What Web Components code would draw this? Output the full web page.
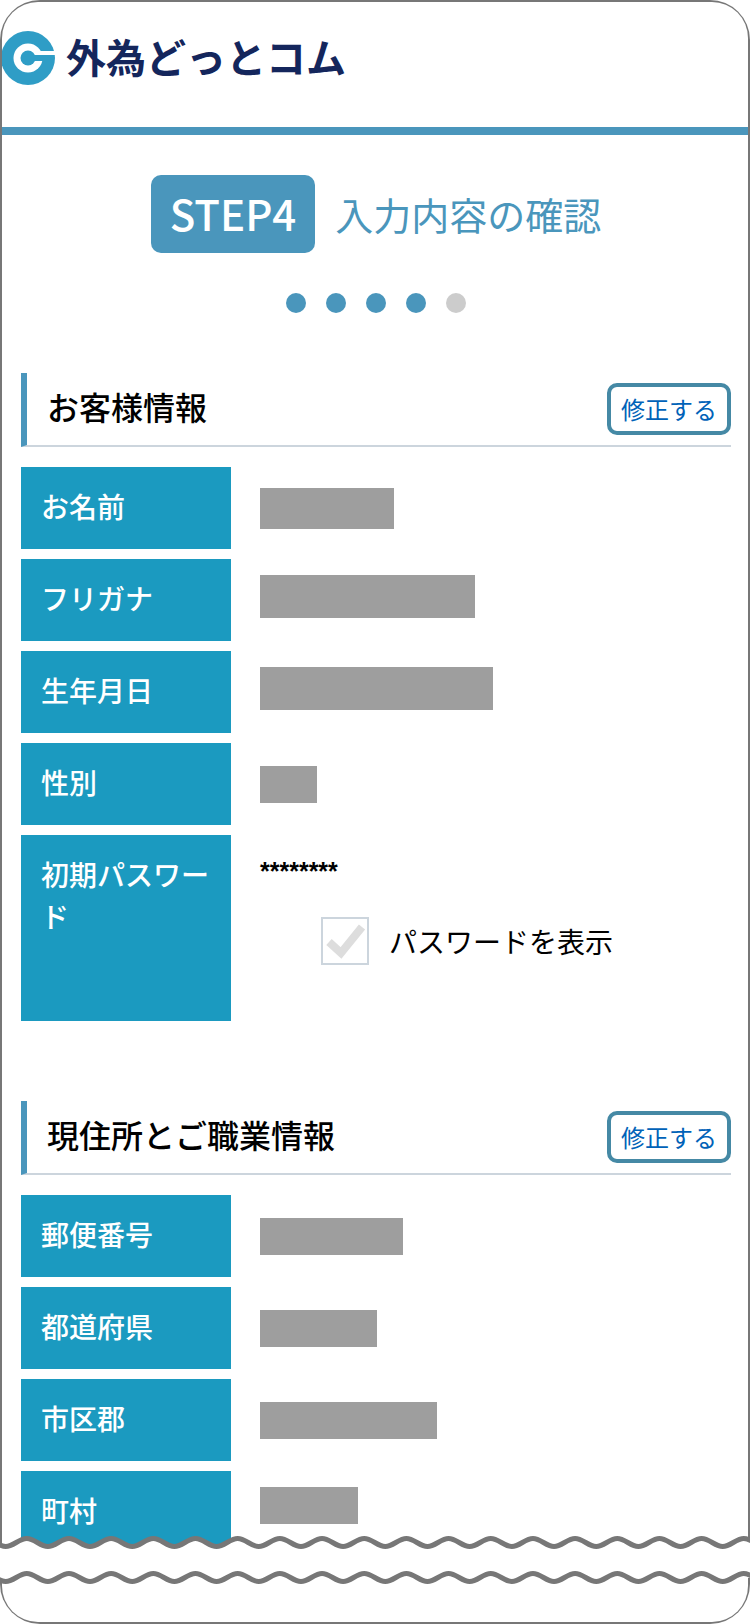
<!DOCTYPE html>
<html lang="ja">
<head>
<meta charset="utf-8">
<meta name="viewport" content="width=device-width, initial-scale=1">
<title>入力内容の確認</title>
<style>
  body {
    margin: 0;
    background: #fff;
    color: #000;
    font-family: "Noto Sans CJK JP", sans-serif;
    font-size: 28px;
    line-height: 42px;
  }
</style>
</head>
<body>
<entry-page>
  <site-header slot="header" name="外為どっとコム"></site-header>
  <step-title step="4" total="5">入力内容の確認</step-title>
  <info-section heading="お客様情報">
    <info-row label="お名前"><masked-value width="134" height="41"></masked-value></info-row>
    <info-row label="フリガナ" align="top"><masked-value width="215" height="43"></masked-value></info-row>
    <info-row label="生年月日" align="top"><masked-value width="233" height="43"></masked-value></info-row>
    <info-row label="性別"><masked-value width="57" height="37"></masked-value></info-row>
    <info-row label="初期パスワード" align="fill"><password-field></password-field></info-row>
  </info-section>
  <info-section heading="現住所とご職業情報">
    <info-row label="郵便番号"><masked-value width="143" height="37"></masked-value></info-row>
    <info-row label="都道府県"><masked-value width="117" height="37"></masked-value></info-row>
    <info-row label="市区郡"><masked-value width="177" height="37"></masked-value></info-row>
    <info-row label="町村" align="top"><masked-value width="98" height="37"></masked-value></info-row>
  </info-section>
</entry-page>

<script>
class EntryPage extends HTMLElement {
  constructor() {
    super();
    this.attachShadow({ mode: 'open' });
  }

  connectedCallback() {
    this.shadowRoot.innerHTML = `
      <style>
        :host { display: block; }
        .frame {
          background: #777;
          padding: 2px 2px 0;
          border-radius: 40px 40px 0 0;
        }
        .sheet {
          background: #fff;
          border-radius: 36px 36px 0 0;
          overflow: hidden;
        }
        main {
          display: flex;
          flex-direction: column;
          gap: 60px;
          padding: 40px 17px 0 19px;
        }
        torn-edge {
          position: relative;
          margin-top: -17px;
        }
        .foot {
          height: 46px;
          margin-top: -8px;
          padding: 0 2px 2px;
          background: #777;
          border-radius: 0 0 40px 40px;
        }
        .foot div {
          height: 100%;
          background: #fff;
          border-radius: 0 0 36px 36px;
        }
      </style>
      <div class="frame">
        <div class="sheet">
          <slot name="header"></slot>
          <main><slot></slot></main>
        </div>
      </div>
      <torn-edge></torn-edge>
      <div class="foot"><div></div></div>
    `;
  }
}

customElements.define('entry-page', EntryPage);

class SiteHeader extends HTMLElement {
  constructor() {
    super();
    this.attachShadow({ mode: 'open' });
  }

  connectedCallback() {
    this.shadowRoot.innerHTML = `
      <style>
        :host { display: block; }
        header {
          display: flex;
          align-items: flex-start;
          gap: 10px;
          padding: 29px 0 42px;
          border-bottom: 8px solid #4a96bc;
        }
        svg { display: block; width: 54px; height: 54px; }
        .name {
          color: #14265c;
          font-size: 40px;
          font-weight: 700;
          line-height: 50px;
        }
      </style>
      <header>
        <svg viewBox="0 0 54 54" aria-hidden="true">
          <circle cx="26" cy="27" r="27" fill="#2f9dc6"/>
          <circle cx="26" cy="27" r="14.500" fill="#fff"/>
          <circle cx="26" cy="27" r="7.500" fill="#2f9dc6"/>
          <path d="M26 24H43V30H26Z" fill="#2f9dc6"/>
          <path d="M33 20H54V24H33Z" fill="#fff"/>
        </svg>
        <span class="name">${this.getAttribute('name')}</span>
      </header>
    `;
  }
}

customElements.define('site-header', SiteHeader);

class StepTitle extends HTMLElement {
  constructor() {
    super();
    this.attachShadow({ mode: 'open' });
  }

  connectedCallback() {
    const step = Number(this.getAttribute('step'));
    const total = Number(this.getAttribute('total'));
    let dots = '';
    for (let i = 1; i <= total; i++) {
      dots += `<li class="${i <= step ? 'done' : ''}"></li>`;
    }

    this.shadowRoot.innerHTML = `
      <style>
        :host {
          display: flex;
          flex-direction: column;
          align-items: center;
          gap: 40px;
          color: #4a96bc;
        }
        h1 {
          display: flex;
          align-items: center;
          gap: 20px;
          margin: 0;
          font-size: 38px;
          font-weight: 400;
        }
        .badge {
          padding: 0 19px 2px;
          background: #4a96bc;
          color: #fff;
          border-radius: 10px;
          font-size: 42px;
          font-weight: 500;
          line-height: 76px;
        }
        ol {
          display: flex;
          gap: 20px;
          margin: 0;
          padding: 0;
          list-style: none;
        }
        li {
          width: 20px;
          height: 20px;
          border-radius: 50%;
          background: #ccc;
        }
        .done { background: #4a96bc; }
      </style>
      <h1><span class="badge">STEP${step}</span><slot></slot></h1>
      <ol>${dots}</ol>
    `;
  }
}

customElements.define('step-title', StepTitle);

class InfoSection extends HTMLElement {
  constructor() {
    super();
    this.attachShadow({ mode: 'open' });
  }

  connectedCallback() {
    this.shadowRoot.innerHTML = `
      <style>
        :host { display: block; }
        :host(:not(:first-of-type)) { margin-top: 20px; }
        .head {
          display: flex;
          align-items: center;
          justify-content: space-between;
          height: 72px;
          padding-left: 20px;
          border-left: 6px solid #4a96bc;
          border-bottom: 2px solid #ccd5dd;
        }
        h2 {
          margin: 0;
          padding-bottom: 6px;
          font-size: 32px;
          font-weight: 500;
        }
        button {
          padding: 0 10px;
          border: 4px solid #4589a5;
          border-radius: 10px;
          background: #fff;
          color: #0062b8;
          font-family: inherit;
          font-size: 24px;
          line-height: 44px;
          cursor: pointer;
        }
        .rows {
          display: flex;
          flex-direction: column;
          gap: 10px;
          margin-top: 20px;
        }
      </style>
      <div class="head">
        <h2>${this.getAttribute('heading')}</h2>
        <button type="button">修正する</button>
      </div>
      <div class="rows"><slot></slot></div>
    `;
  }
}

customElements.define('info-section', InfoSection);

class InfoRow extends HTMLElement {
  constructor() {
    super();
    this.attachShadow({ mode: 'open' });
  }

  connectedCallback() {
    this.shadowRoot.innerHTML = `
      <style>
        :host { display: block; }
        dl {
          display: grid;
          grid-template-columns: 210px 1fr;
          column-gap: 29px;
          margin: 0;
        }
        dt {
          padding: 18px 20px 22px;
          background: #1b9ac0;
          color: #fff;
          font-weight: 500;
        }
        dd {
          display: flex;
          align-items: center;
          margin: 0;
        }
        :host([align="top"]) dd {
          align-items: flex-start;
          padding-top: 16px;
        }
        :host([align="fill"]) dd { align-items: stretch; }
      </style>
      <dl>
        <dt>${this.getAttribute('label')}</dt>
        <dd><slot></slot></dd>
      </dl>
    `;
  }
}

customElements.define('info-row', InfoRow);

class MaskedValue extends HTMLElement {
  constructor() {
    super();
    this.attachShadow({ mode: 'open' });
  }

  connectedCallback() {
    this.shadowRoot.innerHTML = `
      <style>
        :host {
          display: block;
          width: ${this.getAttribute('width')}px;
          height: ${this.getAttribute('height')}px;
          background: #9e9e9e;
        }
      </style>
    `;
  }
}

customElements.define('masked-value', MaskedValue);

class PasswordField extends HTMLElement {
  constructor() {
    super();
    this.attachShadow({ mode: 'open' });
  }

  connectedCallback() {
    this.shadowRoot.innerHTML = `
      <style>
        :host {
          display: flex;
          flex-direction: column;
          gap: 30px;
          padding: 20px 0 56px;
        }
        .value {
          font-family: "Liberation Sans", sans-serif;
          font-size: 25px;
          font-weight: 700;
          line-height: 32px;
        }
        label {
          display: flex;
          align-items: center;
          gap: 20px;
          padding-left: 61px;
        }
        .box {
          display: grid;
          width: 48px;
          height: 48px;
        }
        .box > * { grid-area: 1 / 1; }
        input {
          appearance: none;
          width: 48px;
          height: 48px;
          margin: 0;
          border: 2px solid #ccd5dd;
          background: #fff;
        }
        svg { pointer-events: none; z-index: 1; }
        path { fill: none; stroke: #ddd; stroke-width: 8; }
        input:checked + svg path { stroke: #4a96bc; }
      </style>
      <span class="value">********</span>
      <label>
        <span class="box">
          <input type="checkbox">
          <svg viewBox="0 0 48 48" aria-hidden="true"><path d="M8 25L20 36L41 10"/></svg>
        </span>
        パスワードを表示
      </label>
    `;
  }
}

customElements.define('password-field', PasswordField);

// Two parallel waves with blank paper between them
class TornEdge extends HTMLElement {
  constructor() {
    super();
    this.attachShadow({ mode: 'open' });
  }

  wave() {
    let d = '';
    for (let i = 0; i < 60; i++) {
      d += 'c7.700 0 13.400 -8 21.090 -8s13.400 8 21.090 8';
    }
    return d;
  }

  connectedCallback() {
    const wave = this.wave();
    this.shadowRoot.innerHTML = `
      <style>
        :host { display: block; height: 48px; }
        svg { display: block; width: 100%; height: 48px; }
        .paper { fill: #fff; }
        .line { fill: none; stroke: #777; stroke-width: 5; }
      </style>
      <svg aria-hidden="true">
        <path class="paper" d="M-36.500 10.500${wave}V42H-36.500Z"/>
        <path class="line" d="M-36.500 10.500${wave}"/>
        <path class="line" d="M-36.500 45.500${wave}"/>
      </svg>
    `;
  }
}

customElements.define('torn-edge', TornEdge);
</script>
</body>
</html>
